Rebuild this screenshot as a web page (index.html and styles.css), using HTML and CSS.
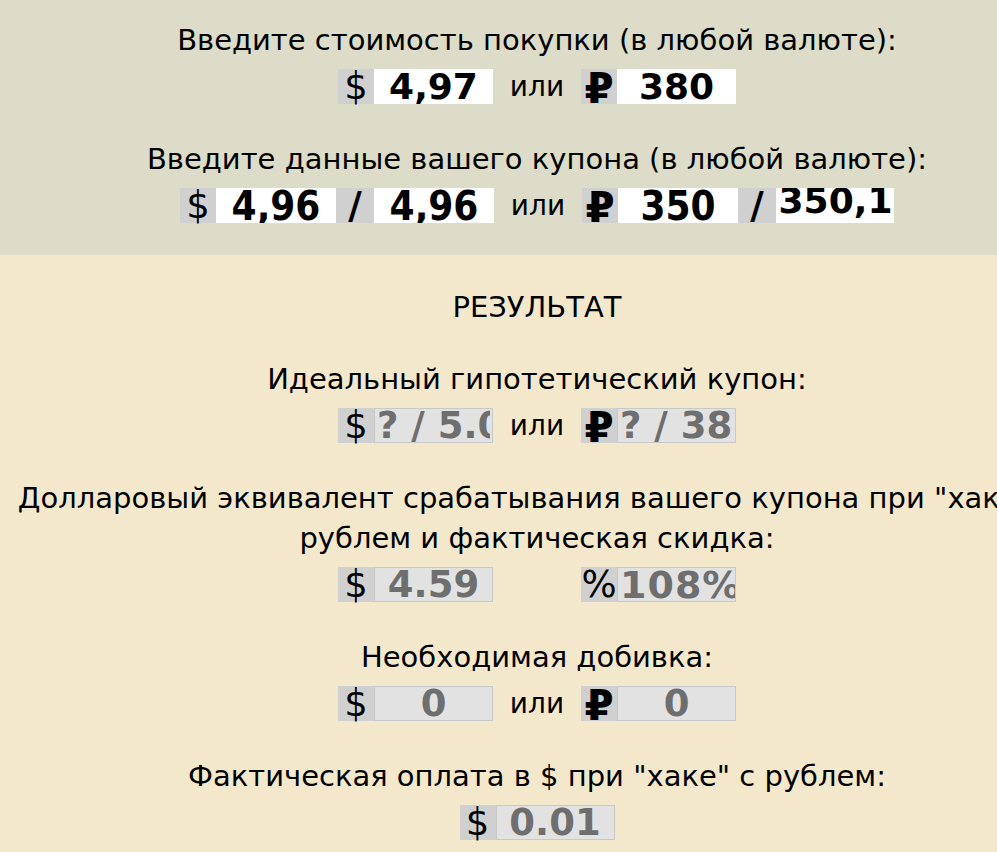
FILE: index.html
```html
<!DOCTYPE html>
<html lang="ru">
<head>
    <meta charset="UTF-8">
    <meta name="viewport" content="width=device-width, initial-scale=1.0">
    <title>Калькулятор купона</title>
    <link rel="stylesheet" href="styles.css">
</head>
<body>
    <div class="page">
        <section class="block block-input">
            <div class="field">
                <p class="label">Введите стоимость покупки (в любой валюте):</p>
                <div class="row">
                    <span class="addon">$</span><input class="box" type="text" value="4,97">
                    <span class="or">или</span>
                    <span class="addon rub">₽</span><input class="box" type="text" value="380">
                </div>
            </div>

            <div class="field">
                <p class="label">Введите данные вашего купона (в любой валюте):</p>
                <div class="row">
                    <span class="addon">$</span><input class="box narrow" type="text" value="4,96"><span class="addon slash">/</span><input class="box narrow" type="text" value="4,96">
                    <span class="or">или</span>
                    <span class="addon rub">₽</span><input class="box narrow" type="text" value="350"><span class="addon slash">/</span><input class="box big" type="text" value="350,1">
                </div>
            </div>
        </section>

        <section class="block block-result">
            <p class="label title">РЕЗУЛЬТАТ</p>

            <div class="field">
                <p class="label">Идеальный гипотетический купон:</p>
                <div class="row">
                    <span class="addon">$</span><input class="box out" type="text" value="? / 5.00" readonly>
                    <span class="or">или</span>
                    <span class="addon rub">₽</span><input class="box out" type="text" value="? / 380" readonly>
                </div>
            </div>

            <div class="field">
                <p class="label">Долларовый эквивалент срабатывания вашего купона при "хаке" с<br>рублем и фактическая скидка:</p>
                <div class="row">
                    <span class="addon">$</span><input class="box out" type="text" value="4.59" readonly>
                    <span class="or"></span>
                    <span class="addon">%</span><input class="box out wide" type="text" value="108%" readonly>
                </div>
            </div>

            <div class="field">
                <p class="label">Необходимая добивка:</p>
                <div class="row">
                    <span class="addon">$</span><input class="box out" type="text" value="0" readonly>
                    <span class="or">или</span>
                    <span class="addon rub">₽</span><input class="box out" type="text" value="0" readonly>
                </div>
            </div>

            <div class="field">
                <p class="label">Фактическая оплата в $ при "хаке" с рублем:</p>
                <div class="row">
                    <span class="addon">$</span><input class="box out" type="text" value="0.01" readonly>
                </div>
            </div>
        </section>
    </div>
</body>
</html>
```

FILE: styles.css
```css
body {
    font-family: "DejaVu Sans", Verdana, sans-serif;
    margin: 0;
    color: #000;
    overflow-x: hidden;
}
.page {
    width: 1074px;
}
.block {
    padding: 20px 0 32px;
}
.block-input {
    background: #dcdcc8;
}
.block-result {
    background: #f4e8cc;
    padding-top: 32px;
    padding-bottom: 40px;
}
.field {
    margin-bottom: 35px;
}
.field:last-child {
    margin-bottom: 0;
}
.label {
    margin: 0 0 9px;
    text-align: center;
    font-size: 29px;
    line-height: 40px;
}
.title {
    margin-bottom: 32px;
}
.row {
    display: flex;
    justify-content: center;
    align-items: center;
    height: 35px;
}
.addon {
    width: 36px;
    height: 35px;
    background: #d0d0d0;
    display: flex;
    align-items: center;
    justify-content: center;
    font-size: 37px;
    line-height: 35px;
}
.rub {
    font-weight: bold;
    font-size: 42px;
    padding-top: 3px;
    box-sizing: border-box;
}
.slash {
    font-weight: bold;
    width: 38px;
}
.or {
    width: 88px;
    text-align: center;
    font-size: 28px;
}
.box {
    width: 119px;
    height: 35px;
    box-sizing: border-box;
    border: none;
    padding: 0 2px;
    margin: 0;
    background: #fff;
    font-family: "DejaVu Sans", sans-serif;
    font-weight: bold;
    font-size: 36px;
    text-align: center;
    color: #000;
    outline: none;
}
.narrow {
    font-family: "DejaVu Sans Condensed", "DejaVu Sans", sans-serif;
    font-stretch: condensed;
    font-size: 40px;
    width: 120px;
}
.big {
    width: 118px;
    padding: 0 0 10px 1px;
    font-size: 36px;
}
.out {
    background: #e2e2e2;
    border: 1px solid #c8c8c8;
    color: #6e6e6e;
    font-size: 37px;
}
.wide {
    letter-spacing: 1px;
    padding-right: 0;
    font-size: 38px;
}
```
